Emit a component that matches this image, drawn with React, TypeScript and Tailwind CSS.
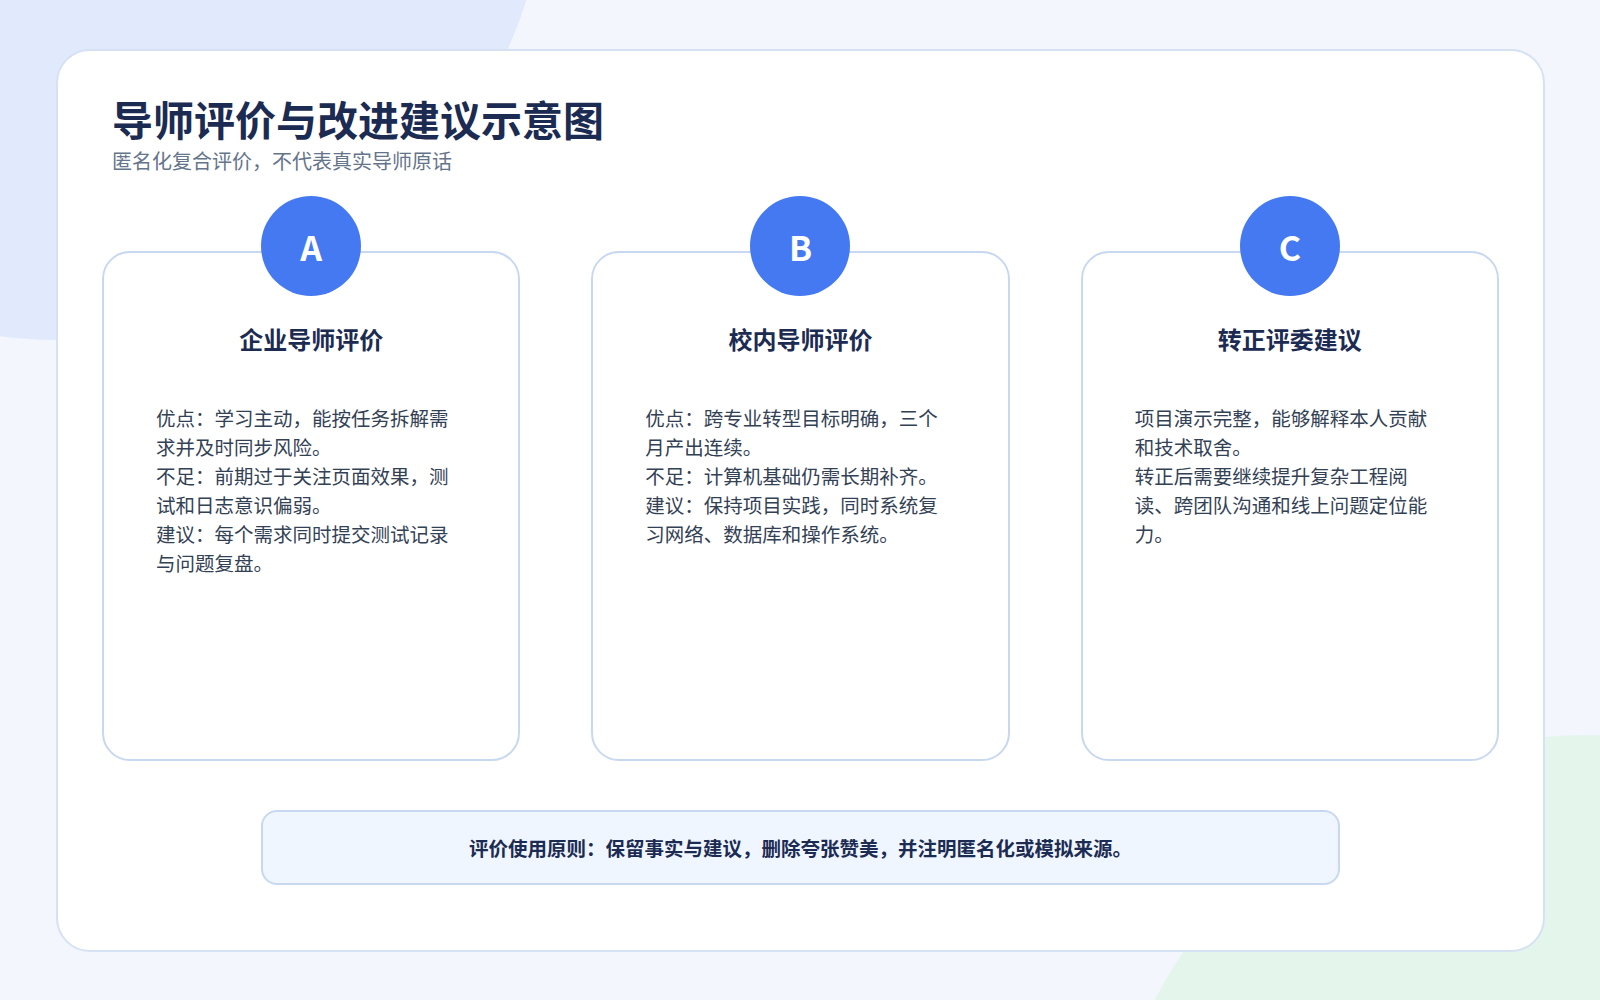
const cards = [
  {
    letter: "A",
    title: "企业导师评价",
    lines: [
      "优点：学习主动，能按任务拆解需求并及时同步风险。",
      "不足：前期过于关注页面效果，测试和日志意识偏弱。",
      "建议：每个需求同时提交测试记录与问题复盘。",
    ],
  },
  {
    letter: "B",
    title: "校内导师评价",
    lines: [
      "优点：跨专业转型目标明确，三个月产出连续。",
      "不足：计算机基础仍需长期补齐。",
      "建议：保持项目实践，同时系统复习网络、数据库和操作系统。",
    ],
  },
  {
    letter: "C",
    title: "转正评委建议",
    lines: [
      "项目演示完整，能够解释本人贡献和技术取舍。",
      "转正后需要继续提升复杂工程阅读、跨团队沟通和线上问题定位能力。",
    ],
  },
];

const App = () => {
  return (
    <div
      className="relative w-[1600px] h-[1000px] overflow-hidden bg-[#f3f6fd]"
      style={{ fontFamily: '"Noto Sans CJK SC", "Noto Sans", sans-serif' }}
    >
      {/* background blobs */}
      <div className="absolute left-[-430px] top-[-640px] w-[980px] h-[980px] rounded-full bg-[#e0eafc]" />
      <div className="absolute left-[1100px] top-[735px] w-[980px] h-[980px] rounded-full bg-[#e4f5ec]" />

      <div className="relative p-[49px_55px_48px_56px] h-full">
        <div className="h-full bg-white border-2 border-[#d6e1f3] rounded-[34px] px-[44px] pt-[40px]">
          <h1 className="ml-[10px] text-[41px] leading-[54px] font-bold text-[#1c2b52]">
            导师评价与改进建议示意图
          </h1>
          <p className="ml-[10px] mt-[2px] text-[20px] leading-[28px] text-[#64748b]">
            匿名化复合评价，不代表真实导师原话
          </p>

          <div className="mt-[21px] flex gap-[71px]">
            {cards.map((c) => (
              <div key={c.letter} className="relative w-[429px] pt-[55px]">
                <div className="absolute left-1/2 top-0 -translate-x-1/2 z-10 w-[100px] h-[100px] rounded-full bg-[#4479f2] flex items-center justify-center text-white text-[34px] font-bold">
                  {c.letter}
                </div>
                <div className="h-[510px] border-2 border-[#c9d8f1] rounded-[28px] bg-white px-[52px] pt-[70px]">
                  <h2 className="text-center text-[24px] leading-[32px] font-bold text-[#1c2b52]">
                    {c.title}
                  </h2>
                  <div className="mt-[48px] text-[19.5px] leading-[29px] text-[#334155]">
                    {c.lines.map((l) => (
                      <p key={l}>{l}</p>
                    ))}
                  </div>
                </div>
              </div>
            ))}
          </div>

          <div className="mx-auto mt-[49px] w-[1079px] h-[75px] rounded-[16px] border-2 border-[#c9d8f1] bg-[#eff6ff] flex items-center justify-center text-[19.5px] font-bold text-[#1c2b52]">
            评价使用原则：保留事实与建议，删除夸张赞美，并注明匿名化或模拟来源。
          </div>
        </div>
      </div>
    </div>
  );
};

export default App;
